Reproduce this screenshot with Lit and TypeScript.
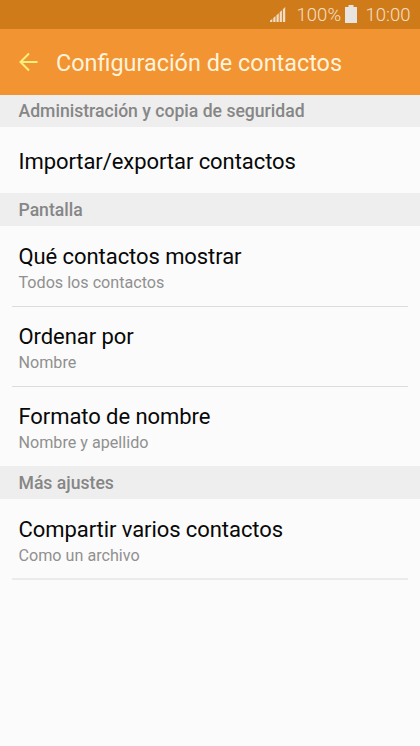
import { LitElement, html, css, nothing } from "lit";
import { customElement, property } from "lit/decorators.js";

interface Item {
  title: string;
  detail?: string;
}

interface Section {
  heading: string;
  items: Item[];
  first?: boolean;
  closed?: boolean;
}

const sections: Section[] = [
  {
    heading: "Administración y copia de seguridad",
    items: [{ title: "Importar/exportar contactos" }],
    first: true,
  },
  {
    heading: "Pantalla",
    items: [
      { title: "Qué contactos mostrar", detail: "Todos los contactos" },
      { title: "Ordenar por", detail: "Nombre" },
      { title: "Formato de nombre", detail: "Nombre y apellido" },
    ],
  },
  {
    heading: "Más ajustes",
    items: [{ title: "Compartir varios contactos", detail: "Como un archivo" }],
    closed: true,
  },
];

@customElement("status-bar")
class StatusBar extends LitElement {
  static styles = css`
    :host {
      display: flex;
      justify-content: flex-end;
      height: 29px;
      background: #d07b1a;
      color: #f6dfc4;
      font-size: 18.5px;
      font-weight: 300;
      line-height: 31px;
      box-sizing: border-box;
      padding-right: 9.5px;
    }
    .signal { margin: 7px 11px 0 0; }
    .battery { margin: 5px 8.5px 0 4px; }
    svg { display: block; flex: none; }
  `;

  render() {
    return html`
      <svg class="signal" width="16" height="16" viewBox="0 0 16 16" fill="#f3dfc8">
        <path d="M0 13.5L2.3 12v3H0zM3.3 11L5.5 9v6H3.3zM6.5 8.3L8.7 6.3V15H6.5zM9.7 5.3l2.2-2V15H9.7zM12.9 2.3L15.2 0v15h-2.3z" />
      </svg>
      <span>100%</span>
      <svg class="battery" width="12" height="18" viewBox="0 0 12 18" fill="#e8e4e0">
        <path d="M3.5 0h5v2H12v16H0V2h3.5z" />
      </svg>
      <span>10:00</span>
    `;
  }
}

@customElement("settings-section")
class SettingsSection extends LitElement {
  @property({ attribute: false }) section!: Section;

  static styles = css`
    :host { display: block; }
    h2 {
      margin: 0;
      height: 33px;
      padding-left: 18.5px;
      background: #eeeeee;
      color: #868686;
      font-size: 17.6px;
      font-weight: 500;
      line-height: 34px;
    }
    h2.first { height: 32px; line-height: 32px; }
    .item {
      box-sizing: border-box;
      height: 80px;
      margin: 0 12px;
      padding: 16px 6.5px 0;
      box-shadow: 0 1px 0 #dcdcdc;
    }
    .item:last-child { box-shadow: none; }
    .closed .item {
      height: 81px;
      border-bottom: 2px solid #ebebeb;
    }
    .item.single { height: 66px; padding-top: 20px; }
    .title { color: #080808; font-size: 22px; letter-spacing: -0.07px; line-height: 29px; }
    .detail { color: #909090; font-size: 16.15px; line-height: 24px; }
  `;

  render() {
    const { heading, items, first, closed } = this.section;
    return html`
      <h2 class=${first ? "first" : "later"}>${heading}</h2>
      <div class=${closed ? "closed" : "open"}>
        ${items.map(
          (item) => html`
            <div class=${item.detail ? "item" : "item single"}>
              <div class="title">${item.title}</div>
              ${item.detail ? html`<div class="detail">${item.detail}</div>` : nothing}
            </div>
          `
        )}
      </div>
    `;
  }
}

@customElement("app-root")
class AppRoot extends LitElement {
  static styles = css`
    :host {
      display: block;
      height: 746px;
      overflow: hidden;
      background: #fbfbfb;
      font-family: Roboto, sans-serif;
    }
    header {
      display: flex;
      align-items: center;
      height: 66px;
      background: #f29432;
      color: #fff3dc;
    }
    svg { flex: none; margin: 0 18px 0 19px; }
    h1 { margin: 2px 0 0; font-size: 23.4px; font-weight: 400; line-height: 30px; }
  `;

  render() {
    return html`
      <status-bar></status-bar>
      <header>
        <svg width="19" height="20" viewBox="0 0 19 20" fill="none" stroke="#fdf07a" stroke-width="2">
          <path d="M10 1.5L1.5 10l8.5 8.5M1.5 10H18.5" />
        </svg>
        <h1>Configuración de contactos</h1>
      </header>
      ${sections.map((s) => html`<settings-section .section=${s}></settings-section>`)}
    `;
  }
}
